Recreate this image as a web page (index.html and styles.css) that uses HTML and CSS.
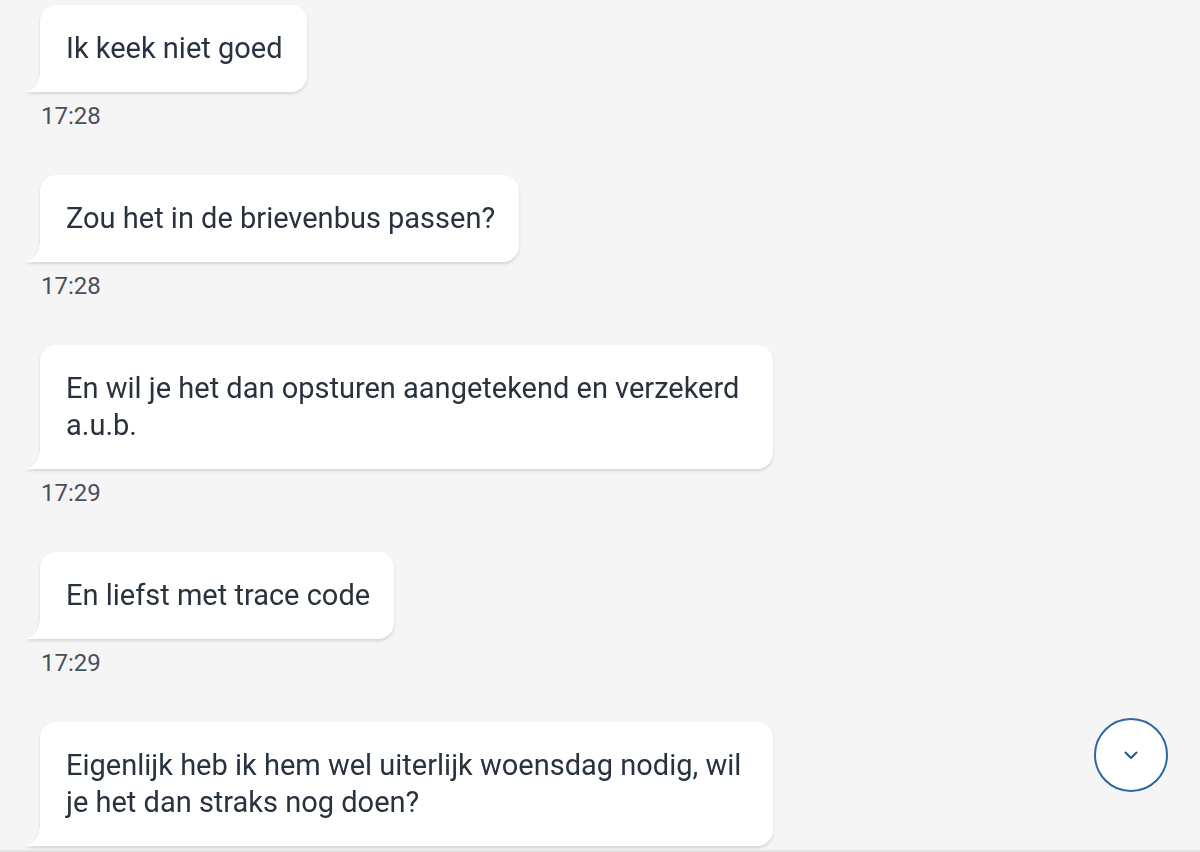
FILE: index.html
```html
<!DOCTYPE html>
<html lang="nl">
<head>
<meta charset="utf-8">
<title>Chat</title>
<link rel="stylesheet" href="styles.css">
</head>
<body>
<main class="chat">
  <div class="msg">
    <div class="bubble">Ik keek niet goed</div>
    <div class="time">17:28</div>
  </div>
  <div class="msg">
    <div class="bubble">Zou het in de brievenbus passen?</div>
    <div class="time">17:28</div>
  </div>
  <div class="msg">
    <div class="bubble">En wil je het dan opsturen aangetekend en verzekerd a.u.b.</div>
    <div class="time">17:29</div>
  </div>
  <div class="msg">
    <div class="bubble">En liefst met trace code</div>
    <div class="time">17:29</div>
  </div>
  <div class="msg">
    <div class="bubble">Eigenlijk heb ik hem wel uiterlijk woensdag nodig, wil je het dan straks nog doen?</div>
  </div>
</main>
<div class="footer"></div>
<button class="scroll-down" aria-label="Naar beneden">
  <svg width="14" height="9" viewBox="0 0 14 9"><path d="M1.5 1.5 L7 7 L12.5 1.5" fill="none" stroke="#1d5b8c" stroke-width="2" stroke-linecap="round" stroke-linejoin="round"/></svg>
</button>
</body>
</html>
```
FILE: styles.css
```css
html, body {
  height: 100%;
}
body {
  margin: 0;
  background: #f5f5f5;
  font-family: Roboto, "Liberation Sans", sans-serif;
  display: flex;
  flex-direction: column;
  overflow: hidden;
}
.chat {
  flex: 1;
  overflow: hidden;
  padding-top: 5px;
  display: flex;
  flex-direction: column;
  gap: 45px;
}
.msg {
  display: flex;
  flex-direction: column;
  align-items: flex-start;
}
.bubble {
  position: relative;
  margin-left: 40px;
  max-width: 733px;
  box-sizing: border-box;
  background: #fff;
  border-radius: 16px 16px 16px 0;
  padding: 25px 24px 25px 26px;
  font-size: 29px;
  line-height: 37px;
  color: #29323f;
  filter: drop-shadow(0 2px 1.5px rgba(0, 0, 0, 0.13));
}
.bubble::before {
  content: "";
  position: absolute;
  left: -16px;
  bottom: 0;
  width: 16px;
  height: 20px;
  background: radial-gradient(16px 20px at 0 0, rgba(255,255,255,0) 97%, #fff 100%);
}
.time {
  margin-top: 10px;
  margin-left: 41px;
  font-size: 24px;
  line-height: 28px;
  color: #48505c;
}
.footer {
  height: 2px;
  flex: none;
  background: #e3e3e3;
}
.scroll-down {
  position: absolute;
  left: 1094px;
  top: 718px;
  width: 74px;
  height: 74px;
  box-sizing: border-box;
  border-radius: 50%;
  border: 2px solid #2f67a3;
  background: #fff;
  padding: 0;
  display: flex;
  align-items: center;
  justify-content: center;
  cursor: pointer;
}
```
